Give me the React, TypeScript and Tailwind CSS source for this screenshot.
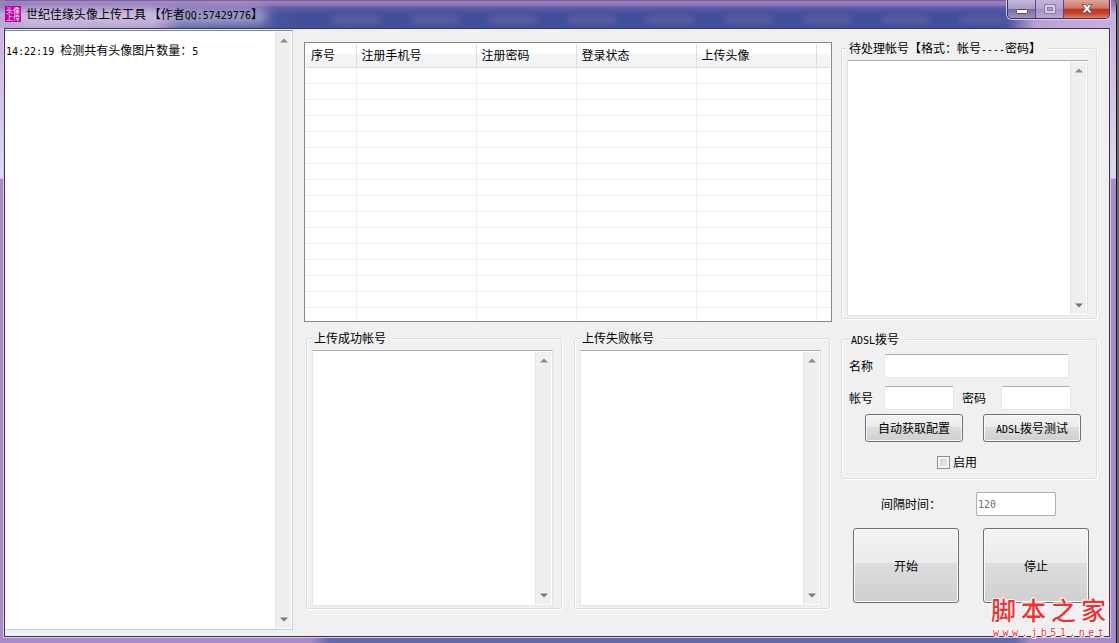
import { useState, type ReactNode } from "react"

const COLUMNS = [
  { label: "序号", width: "w-[50px]" },
  { label: "注册手机号", width: "w-[120px]" },
  { label: "注册密码", width: "w-[100px]" },
  { label: "登录状态", width: "w-[120px]" },
  { label: "上传头像", width: "w-[120px]" },
  { label: "", width: "" },
]

const EMPTY_ROWS = Array.from({ length: 16 }, (_, i) => i)
const BACKDROP_ITEMS = Array.from({ length: 9 }, (_, i) => i)

const inputStyle =
  "h-6 rounded-xs border border-[#e2e6ee] border-t-[#abadb3] bg-white px-0.5 outline-none"

const buttonStyle =
  "rounded-[3px] border border-[#707070] bg-[linear-gradient(#f3f3f3_0%,#ebebeb_46%,#dddddd_47%,#cfcfcf_100%)] shadow-[inset_0_0_0_1px_#fafafa] active:bg-[#c4e5f6]"

// half-width characters in the bitmap style of the dialog
function Latin({ children }: { children: ReactNode }) {
  return (
    <span className="font-['DejaVu_Sans_Mono',monospace] text-[10px] leading-none">{children}</span>
  )
}

function Scrollbar() {
  return (
    <div className="flex w-4 shrink-0 flex-col items-center justify-between border-l border-[#e3e3e3] bg-[#efefef] py-1.5">
      <svg width="8" height="5" viewBox="0 0 8 5" aria-hidden="true">
        <path d="M4 0.500L8 4.500H0Z" fill="#8a8a8a" />
      </svg>
      <svg width="8" height="5" viewBox="0 0 8 5" aria-hidden="true">
        <path d="M0 0.500H8L4 4.500Z" fill="#777" />
      </svg>
    </div>
  )
}

function AccountBox({ title, name }: { title: ReactNode; name: string }) {
  return (
    <fieldset className="min-w-0 flex-1 rounded-[3px] border border-[#d5dfe5] pt-1 pr-2 pb-0.5 pl-[5px] shadow-[inset_1px_1px_0_#fff,1px_1px_0_#fff]">
      <legend className="h-4 bg-[#f0f0f0] px-0.5 pr-1.5 leading-4">
        <label htmlFor={name}>{title}</label>
      </legend>
      <div className="flex h-64 border border-[#e2e3ea] border-t-[#abadb3] bg-white p-px">
        <textarea id={name} className="min-w-0 flex-1 resize-none overflow-hidden outline-none" />
        <Scrollbar />
      </div>
    </fieldset>
  )
}

function TitleBar() {
  return (
    <header className="relative flex h-7 shrink-0 items-center overflow-hidden bg-[linear-gradient(90deg,#bda9d8_0px,#b6a2d4_70px,#b096cc_155px,#5a5ea6_180px,#42509a_300px,#3f4f9a_1005px,#b9a0d4_1035px,#c6b2de_100%)] pl-[5px]">
      <div className="absolute inset-0 bg-[linear-gradient(#51406f_0px,#9c82bf_1px,#9479bb_4px,rgba(120,100,180,0.5)_8px,transparent_14px)]" />
      <div className="absolute top-2 left-5 h-4 w-62 rounded-full bg-[#ded3ea]/60 blur-[6px]" />
      <div className="absolute top-4 right-27 left-83 flex justify-between">
        {BACKDROP_ITEMS.map((i) => (
          <span key={i} className="h-2 w-12 bg-[#7a6cb0]/50 blur-[3px]" />
        ))}
      </div>
      <div className="relative grid size-4 shrink-0 place-items-center bg-[#c4009c] text-[7px] leading-[7px] text-white">
        <span>
          头像
          <br />
          上传
        </span>
      </div>
      <h1 className="relative ml-[5px] whitespace-pre">
        世纪佳缘头像上传工具 【作者<Latin>QQ:57429776</Latin>】
      </h1>
      <div className="absolute top-0 right-1.5 flex h-[19px] overflow-hidden rounded-b-[5px] border border-t-0 border-[#3c3157] shadow-[0_0_0_1px_#d9cbe8]">
        <button
          aria-label="最小化"
          className="grid w-7 place-items-center border-r border-[#574a75] bg-[linear-gradient(#c5b9da_0%,#a99bc6_48%,#77699f_50%,#a493c4_100%)]"
        >
          <svg width="14" height="18" viewBox="0 0 14 18">
            <rect x="1.500" y="9.500" width="11" height="4" rx="1" fill="#fff" stroke="#4e4968" />
          </svg>
        </button>
        <button
          aria-label="最大化"
          disabled
          className="grid w-7 place-items-center border-r border-[#574a75] bg-[linear-gradient(#c5b4dc_0%,#b6a1d0_48%,#a58fc4_50%,#bba7d6_100%)]"
        >
          <svg width="12" height="18" viewBox="0 0 12 18" fill="none">
            <path d="M0.500 4.500H11.500V13.500H0.500Z" stroke="#8b7da5" />
            <path d="M1.500 5.500H10.500V12.500H1.500Z" stroke="#d6cce5" />
            <path d="M2.500 6.500H9.500V11.500H2.500Z" stroke="#d6cce5" />
            <path d="M3.500 7.500H8.500V10.500H3.500Z" stroke="#8b7da5" />
          </svg>
        </button>
        <button
          aria-label="关闭"
          className="grid w-[45px] place-items-center bg-[linear-gradient(#dda49a_0%,#cd7767_46%,#b6331d_50%,#c8452c_75%,#df8066_100%)]"
        >
          <svg width="14" height="18" viewBox="0 0 14 18">
            <path
              d="M2 4.500H5.300L7 6.600L8.700 4.500H12L9 8.500L12.200 13H8.800L7 10.600L5.200 13H1.800L5 8.500Z"
              fill="#fff"
              stroke="#5b4a55"
              strokeWidth="0.900"
            />
          </svg>
        </button>
      </div>
    </header>
  )
}

function AccountTable() {
  return (
    <div className="h-[280px] overflow-hidden border border-[#828790] bg-white p-px">
      <table className="w-full table-fixed border-collapse text-left">
        <thead>
          <tr className="h-[23px] bg-[linear-gradient(#ffffff_40%,#f5f6f8_45%,#f1f2f4_100%)]">
            {COLUMNS.map((col) => (
              <th
                key={col.label}
                scope="col"
                className={`${col.width} border-r border-b border-[#dcdde0] px-[5px] py-0 font-normal last:border-r-0`}
              >
                {col.label}
              </th>
            ))}
          </tr>
        </thead>
        <tbody>
          {EMPTY_ROWS.map((row) => (
            <tr key={row} className="h-4">
              {COLUMNS.map((col) => (
                <td
                  key={col.label}
                  className="border-r border-b border-[#efefef] p-0 last:border-r-0"
                />
              ))}
            </tr>
          ))}
        </tbody>
      </table>
    </div>
  )
}

function DialSettings() {
  const [enabled, setEnabled] = useState(false)

  return (
    <fieldset className="mt-3 rounded-[3px] border border-[#d5dfe5] pt-[7px] pr-2 pb-2 pl-[7px] shadow-[inset_1px_1px_0_#fff,1px_1px_0_#fff]">
      <legend className="h-4 bg-[#f0f0f0] px-0.5 pr-1.5 leading-4">
        <Latin>ADSL</Latin>拨号
      </legend>
      <div className="flex items-center">
        <label htmlFor="dial-name" className="w-[35px]">
          名称
        </label>
        <input id="dial-name" className={`${inputStyle} w-[185px]`} />
      </div>
      <div className="mt-2 flex items-center">
        <label htmlFor="dial-account" className="w-[35px]">
          帐号
        </label>
        <input id="dial-account" className={`${inputStyle} w-[70px]`} />
        <label htmlFor="dial-password" className="ml-2 w-[39px]">
          密码
        </label>
        <input id="dial-password" type="password" className={`${inputStyle} w-[70px]`} />
      </div>
      <div className="mt-1 flex gap-5 pl-4">
        <button className={`${buttonStyle} h-7 w-[98px]`}>自动获取配置</button>
        <button className={`${buttonStyle} h-7 w-[98px]`}>
          <Latin>ADSL</Latin>拨号测试
        </button>
      </div>
      <label className="mt-3 flex h-4 items-center gap-[3px] pl-22">
        <input
          type="checkbox"
          checked={enabled}
          onChange={(e) => setEnabled(e.target.checked)}
          className="size-[13px] appearance-none border border-[#8e8f8f] bg-[linear-gradient(135deg,#c3c8d0,#f4f4f4)] shadow-[inset_0_0_0_2px_#f4f4f4] checked:bg-[#4b6a9b]"
        />
        启用
      </label>
    </fieldset>
  )
}

export default function App() {
  const [interval, setInterval] = useState("120")

  return (
    <div className="min-h-screen bg-[linear-gradient(90deg,#8a8a8a,#6e6e6e)] pr-0.5 font-['Noto_Sans_CJK_SC',sans-serif] text-xs leading-4 text-black">
      <div className="relative flex min-h-screen flex-col overflow-hidden rounded-t-md border-r border-[#15101f] bg-[linear-gradient(90deg,#a98bc8_310px,#6668ac_330px,#6668ac_1015px,#a98bc8_1030px)]">
        <TitleBar />
        <div className="flex grow bg-[linear-gradient(#c8b4df_0px,#e0d8ec_150px,#a98bc8_151px)] bg-[length:100%_600px] bg-no-repeat pr-1.5 pl-1">
          <main className="flex grow border border-[#3b3358] bg-[#f0f0f0] pr-3 shadow-[0_0_0_1px_#d6c8e8]">
            <div className="mt-px mb-1.5 flex w-72 shrink-0 border border-l-0 border-[#b5d4e9] border-t-[#5a8fbd] bg-white p-px pl-0">
              <div role="log" aria-label="日志" className="grow pt-2.5 pl-px">
                <Latin>14:22:19 </Latin>检测共有头像图片数量：<Latin>5</Latin>
              </div>
              <Scrollbar />
            </div>

            <section className="ml-[11px] min-w-0 grow pt-[13px]">
              <AccountTable />
              <div className="mt-2 flex gap-3 px-0.5">
                <AccountBox title="上传成功帐号" name="succeeded" />
                <AccountBox title="上传失败帐号" name="failed" />
              </div>
            </section>

            <section className="ml-[9px] w-64 shrink-0 pt-[11px]">
              <AccountBox
                title={
                  <>
                    待处理帐号【格式：帐号<Latin>----</Latin>密码】
                  </>
                }
                name="pending"
              />
              <DialSettings />
              <div className="mt-[13px] flex items-center pl-10">
                <label htmlFor="interval" className="w-[95px]">
                  间隔时间：
                </label>
                <input
                  id="interval"
                  value={interval}
                  onChange={(e) => setInterval(e.target.value)}
                  className="h-6 w-20 rounded-xs border border-[#afafaf] bg-white px-px font-['DejaVu_Sans_Mono',monospace] text-[10px] text-[#6d6d6d] outline-none"
                />
              </div>
              <div className="mt-3 flex gap-6 pl-3">
                <button className={`${buttonStyle} h-[75px] w-[106px]`}>开始</button>
                <button className={`${buttonStyle} h-[75px] w-[106px]`}>停止</button>
              </div>
            </section>
          </main>
        </div>
        <div className="h-1.5 shrink-0" />

        <div className="pointer-events-none absolute right-2.5 bottom-1 w-[115px] text-[#f5302e] [text-shadow:1px_0_#fff,-1px_0_#fff,0_1px_#fff,0_-1px_#fff,1px_1px_#fff,-1px_-1px_#fff]">
          <div className="flex justify-between text-[25px] leading-9 font-medium">
            <span>脚</span>
            <span>本</span>
            <span>之</span>
            <span>家</span>
          </div>
          <div className="flex justify-between px-0.5 font-['DejaVu_Sans_Mono',monospace] text-[10px] leading-3">
            {"www.jb51.net".split("").map((char, i) => (
              <span key={i}>{char}</span>
            ))}
          </div>
        </div>
      </div>
    </div>
  )
}
